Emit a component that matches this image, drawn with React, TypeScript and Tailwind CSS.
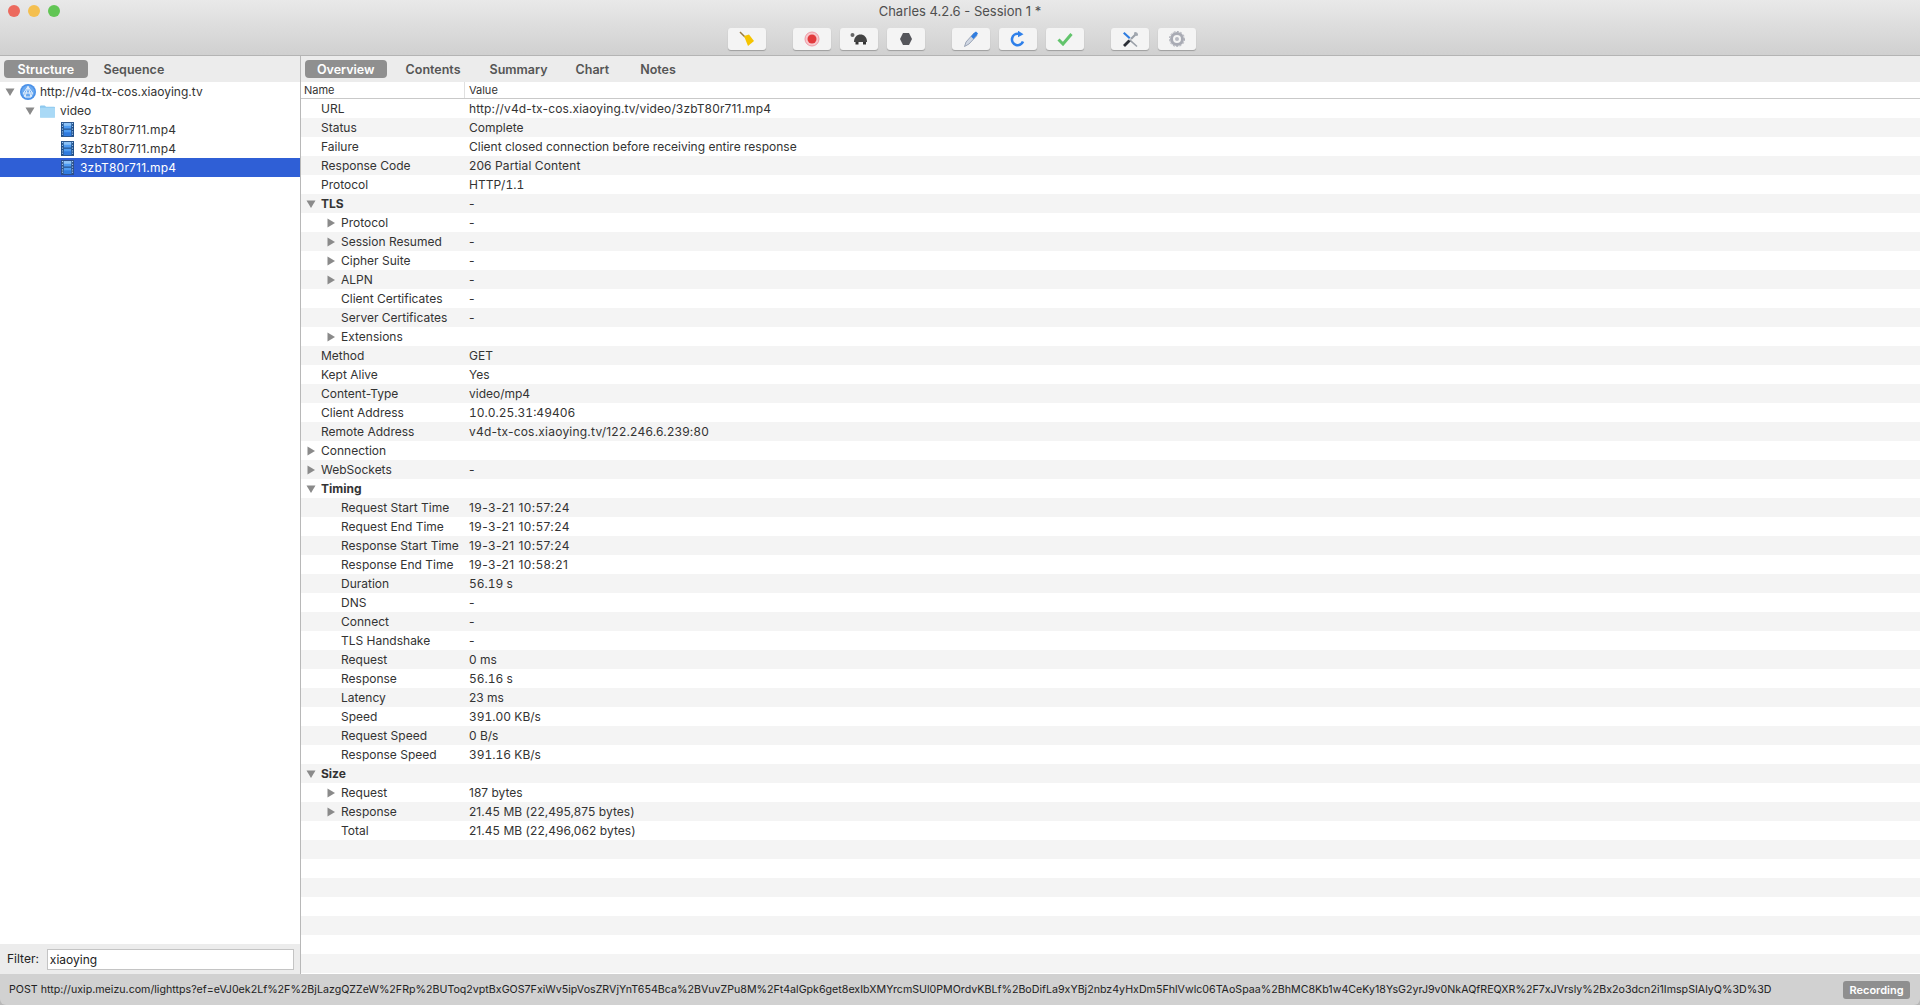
import React from "react";

const F = "font-['Inter','Liberation_Sans',sans-serif]";

type Row = { n: string; v: string; lvl?: number; tri?: "open" | "closed"; bold?: boolean; c?: string };
const DATE = "tracking-[0.45px]";
const NUM = "tabular-nums";
const rows: Row[] = [
  { n: "URL", v: "http://v4d-tx-cos.xiaoying.tv/video/3zbT80r711.mp4", c: "tracking-[0.14px]" },
  { n: "Status", v: "Complete" },
  { n: "Failure", v: "Client closed connection before receiving entire response" },
  { n: "Response Code", v: "206 Partial Content", c: "tracking-[0.1px]" },
  { n: "Protocol", v: "HTTP/1.1", c: NUM },
  { n: "TLS", v: "-", tri: "open", bold: true },
  { n: "Protocol", v: "-", lvl: 1, tri: "closed" },
  { n: "Session Resumed", v: "-", lvl: 1, tri: "closed" },
  { n: "Cipher Suite", v: "-", lvl: 1, tri: "closed" },
  { n: "ALPN", v: "-", lvl: 1, tri: "closed" },
  { n: "Client Certificates", v: "-", lvl: 1 },
  { n: "Server Certificates", v: "-", lvl: 1 },
  { n: "Extensions", v: "", lvl: 1, tri: "closed" },
  { n: "Method", v: "GET" },
  { n: "Kept Alive", v: "Yes" },
  { n: "Content-Type", v: "video/mp4" },
  { n: "Client Address", v: "10.0.25.31:49406", c: NUM },
  { n: "Remote Address", v: "v4d-tx-cos.xiaoying.tv/122.246.6.239:80", c: "tracking-[0.22px]" },
  { n: "Connection", v: "", tri: "closed" },
  { n: "WebSockets", v: "-", tri: "closed" },
  { n: "Timing", v: "", tri: "open", bold: true },
  { n: "Request Start Time", v: "19-3-21 10:57:24", lvl: 1, c: DATE },
  { n: "Request End Time", v: "19-3-21 10:57:24", lvl: 1, c: DATE },
  { n: "Response Start Time", v: "19-3-21 10:57:24", lvl: 1, c: DATE },
  { n: "Response End Time", v: "19-3-21 10:58:21", lvl: 1, c: DATE },
  { n: "Duration", v: "56.19 s", lvl: 1, c: NUM },
  { n: "DNS", v: "-", lvl: 1 },
  { n: "Connect", v: "-", lvl: 1 },
  { n: "TLS Handshake", v: "-", lvl: 1 },
  { n: "Request", v: "0 ms", lvl: 1 },
  { n: "Response", v: "56.16 s", lvl: 1, c: NUM },
  { n: "Latency", v: "23 ms", lvl: 1 },
  { n: "Speed", v: "391.00 KB/s", lvl: 1, c: NUM },
  { n: "Request Speed", v: "0 B/s", lvl: 1 },
  { n: "Response Speed", v: "391.16 KB/s", lvl: 1, c: NUM },
  { n: "Size", v: "", tri: "open", bold: true },
  { n: "Request", v: "187 bytes", lvl: 1, tri: "closed" },
  { n: "Response", v: "21.45 MB (22,495,875 bytes)", lvl: 1, tri: "closed", c: "tracking-[0.05px]" },
  { n: "Total", v: "21.45 MB (22,496,062 bytes)", lvl: 1, tri: undefined, c: "tracking-[0.05px]" },
  ...Array.from({ length: 7 }, () => ({ n: "", v: "" })),
];

function Tri({ open }: { open: boolean }) {
  return (
    <svg width="10" height="10" viewBox="0 0 10 10" className="shrink-0">
      {open ? <path d="M0.5 1.5h9L5 9z" fill="#8a8a8a" /> : <path d="M1.5 0.5v9L9 5z" fill="#8a8a8a" />}
    </svg>
  );
}

function Film({ sel }: { sel?: boolean }) {
  return (
    <svg width="13" height="15" viewBox="0 0 14 16" className="shrink-0">
      <rect width="14" height="16" fill={sel ? "#2d4f86" : "#1f4d86"} />
      <rect x="3" y="1" width="8" height="14" fill="#4f9cf2" />
      <rect x="3" y="1" width="8" height="3" fill="#8cc2f7" />
      <rect x="3" y="7" width="8" height="1.2" fill="#1f4d86" />
      <rect x="3" y="11" width="8" height="4" fill="#2f7ade" />
      {[1.5, 4.5, 7.5, 10.5, 13].map((y) => (
        <g key={y}>
          <rect x="1" y={y - 0.5} width="1.2" height="1.2" fill="#a8cdf5" />
          <rect x="11.8" y={y - 0.5} width="1.2" height="1.2" fill="#a8cdf5" />
        </g>
      ))}
    </svg>
  );
}

function Globe() {
  return (
    <svg width="16" height="16" viewBox="0 0 16 16" className="shrink-0">
      <circle cx="8" cy="8" r="8" fill="#4a90e8" />
      <circle cx="8" cy="8" r="6.5" fill="#6aa9f0" />
      <path d="M8 2.5 12.5 9 11 13H5L3.5 9zM3.5 9h9M8 2.5 5 13M8 2.5 11 13" fill="none" stroke="#e6f0fc" strokeWidth="1" />
    </svg>
  );
}

function Folder() {
  return (
    <svg width="15" height="14" viewBox="0 0 16 14" className="shrink-0">
      <path d="M0 2a1 1 0 0 1 1-1h4l1.5 1.5H15a1 1 0 0 1 1 1V13a1 1 0 0 1-1 1H1a1 1 0 0 1-1-1z" fill="#8ec9ef" />
      <rect y="3.5" width="16" height="10.5" rx="1" fill="#a9d9f6" />
    </svg>
  );
}

function ToolBtn({ children }: { children: React.ReactNode }) {
  return (
    <div className="w-[38px] h-[22px] rounded-[3px] bg-[#f4f4f4] shadow-[0_1px_1px_rgba(0,0,0,0.25)] flex items-center justify-center">
      {children}
    </div>
  );
}

const Tab = ({ label, active, small }: { label: string; active?: boolean; small?: boolean }) => (
  <div
    className={
      active
        ? `h-[18px] ${small ? "px-[12px]" : "px-[13.5px]"} rounded-[4px] bg-[#8f8f8f] text-white font-semibold text-[12.5px] leading-[19px]`
        : "h-[18px] px-[14px] text-[#555] font-semibold text-[12.5px] leading-[19px]"
    }
  >
    {label}
  </div>
);

const TreeRow = ({ indent, children, sel }: { indent: string; children: React.ReactNode; sel?: boolean }) => (
  <div className={`h-[19px] flex items-center ${indent} ${sel ? "bg-[#2f5fd6] text-white" : "text-[#333]"}`}>{children}</div>
);

export default function App() {
  return (
    <div className={`w-[1920px] h-[1005px] flex flex-col overflow-hidden bg-[#b8b8b8] text-[12px] ${F}`}>
      {/* title bar */}
      <div className="h-[56px] shrink-0 flex flex-col bg-gradient-to-b from-[#e9e9e9] to-[#d0d0d0] border-b border-[#b4b4b4]">
        <div className="relative h-[22px] shrink-0 flex items-center justify-center pt-[1px] text-[13px] text-[#4f4f4f]">
          <div className="absolute left-[8px] top-[5px] flex gap-[8px]">
            <span className="w-[12px] h-[12px] rounded-full bg-[#ec6a5e]" />
            <span className="w-[12px] h-[12px] rounded-full bg-[#f4bf4f]" />
            <span className="w-[12px] h-[12px] rounded-full bg-[#61c554]" />
          </div>
          Charles 4.2.6 - Session 1 *
        </div>
        <div className="flex justify-center pt-[6px] pl-[4px] gap-[27px]">
          <ToolBtn>
            <svg width="16" height="16" viewBox="0 0 16 16">
              <path d="M1 1 6 6" stroke="#9a7a3a" strokeWidth="1.5" />
              <path d="M5 5 10 3.5 15 10 9 15z" fill="#f5c400" />
            </svg>
          </ToolBtn>
          <div className="flex gap-[9px]">
            <ToolBtn>
              <svg width="16" height="16" viewBox="0 0 16 16">
                <circle cx="8" cy="8" r="7" fill="#f7c8cd" stroke="#ef9aa5" />
                <circle cx="8" cy="8" r="4.5" fill="#e23a3c" />
              </svg>
            </ToolBtn>
            <ToolBtn>
              <svg width="18" height="14" viewBox="0 0 18 14">
                <circle cx="2.5" cy="3" r="2" fill="#666" />
                <path d="M4 10C4 5 7 2.5 10.5 2.5S17 5 17 10z" fill="#444" />
                <path d="M5.5 10h3v2.5h-3zM13 10h3v2.5h-3z" fill="#333" />
              </svg>
            </ToolBtn>
            <ToolBtn>
              <svg width="14" height="14" viewBox="0 0 14 14">
                <path d="M4 1h6l3 6-3 6H4L1 7z" fill="#55565b" />
              </svg>
            </ToolBtn>
          </div>
          <div className="flex gap-[9px]">
            <ToolBtn>
              <svg width="16" height="18" viewBox="0 0 16 18">
                <path d="M1.5 16.5 3 12 11 3l3 2.5L6 14z" fill="#cfd6e2" stroke="#7c8aa0" strokeWidth=".7" />
                <path d="M8 6.5 11.5 2.5 13 1.5 15 3.5 14 5 10.5 9z" fill="#2f7de0" />
              </svg>
            </ToolBtn>
            <ToolBtn>
              <svg width="16" height="16" viewBox="0 0 16 16">
                <path d="M13 10.5A5.7 5.7 0 1 1 8.5 2.8" fill="none" stroke="#2f80ea" strokeWidth="2.6" />
                <path d="M8 0v6.5l5.5-3z" fill="#2f80ea" transform="translate(0 -.3)" />
              </svg>
            </ToolBtn>
            <ToolBtn>
              <svg width="16" height="14" viewBox="0 0 16 14">
                <path d="M1.5 7.5 6 12 14.5 2" fill="none" stroke="#62c46c" strokeWidth="3" />
              </svg>
            </ToolBtn>
          </div>
          <div className="flex gap-[9px]">
            <ToolBtn>
              <svg width="17" height="17" viewBox="0 0 17 17">
                <path d="M8 8 15.5 15 14.5 16 7 9.5z" fill="#9aa0a8" />
                <path d="M9 8 13.5 3.5" stroke="#9aa0a8" strokeWidth="2.2" />
                <path d="M12.5 1a3 3 0 0 1 3.5 3.5l-2 .5-2-2z" fill="#a2a8b0" />
                <path d="M1 2.5 2.5 1 8.5 6.5 7 8z" fill="#2f7de0" />
                <path d="M6.5 8.5 8.5 10.5 3 16 1 14z" fill="#2b2f36" />
              </svg>
            </ToolBtn>
            <ToolBtn>
              <svg width="16" height="16" viewBox="0 0 16 16">
                <circle cx="8" cy="8" r="5.5" fill="none" stroke="#a9abb4" strokeWidth="3" />
                <circle cx="8" cy="8" r="7.5" fill="none" stroke="#a9abb4" strokeWidth="1" strokeDasharray="2 1.5" />
                <circle cx="8" cy="8" r="2" fill="#b8bac2" />
              </svg>
            </ToolBtn>
          </div>
        </div>
      </div>

      {/* main */}
      <div className="flex-1 min-h-0 flex">
        {/* left */}
        <div className="w-[301px] shrink-0 flex flex-col border-r border-[#b8b8b8]">
          <div className="h-[26px] shrink-0 bg-[#ececec] flex items-center pl-[4px] gap-[2px]">
            <Tab label="Structure" active />
            <Tab label="Sequence" />
          </div>
          <div className="flex-1 min-h-0 bg-white">
            <TreeRow indent="pl-[5px] gap-[5px]">
              <Tri open />
              <span className="mr-[-1px]"><Globe /></span>
              <span>http://v4d-tx-cos.xiaoying.tv</span>
            </TreeRow>
            <TreeRow indent="pl-[25px] gap-[5px]">
              <Tri open />
              <Folder />
              <span>video</span>
            </TreeRow>
            <TreeRow indent="pl-[61px] gap-[6px]">
              <Film />
              <span className="tracking-[0.2px]">3zbT80r711.mp4</span>
            </TreeRow>
            <TreeRow indent="pl-[61px] gap-[6px]">
              <Film />
              <span className="tracking-[0.2px]">3zbT80r711.mp4</span>
            </TreeRow>
            <TreeRow indent="pl-[61px] gap-[6px]" sel>
              <Film sel />
              <span className="tracking-[0.2px]">3zbT80r711.mp4</span>
            </TreeRow>
          </div>
          <div className="h-[30px] shrink-0 bg-[#ececec] flex items-center pl-[7px] gap-[8px] text-[#222]">
            <span>Filter:</span>
            <div className="w-[247px] h-[21px] bg-white border border-[#c4c4c4] pl-[2px] leading-[19px]">xiaoying</div>
          </div>
        </div>
        {/* right */}
        <div className="flex-1 min-w-0 flex flex-col">
          <div className="h-[26px] shrink-0 bg-[#ececec] flex items-center pl-[4px]">
            <Tab label="Overview" active small />
            <span className="w-[5px]" />
            <Tab label="Contents" />
            <span className="w-[1px]" />
            <Tab label="Summary" />
            <Tab label="Chart" />
            <span className="w-[3px]" />
            <Tab label="Notes" />
          </div>
          <div className="h-[17px] shrink-0 flex items-center bg-white border-b border-[#c9c9c9] text-[11px] text-[#333]">
            <div className="w-[164px] shrink-0 pl-[3px] border-r border-[#e0e0e0]">Name</div>
            <div className="pl-[4px]">Value</div>
          </div>
          <div className="flex-1 min-h-0 overflow-hidden bg-white">
            {rows.map((r, i) => (
              <div key={i} className={`h-[19px] flex items-center text-[#333] ${i % 2 ? "bg-[#f4f4f4]" : "bg-white"}`}>
                <div className={`w-[168px] shrink-0 flex items-center ${r.lvl ? "pl-[25px]" : "pl-[5px]"} ${r.bold ? "font-bold" : ""}`}>
                  <span className="w-[15px] shrink-0 flex">{r.tri && <Tri open={r.tri === "open"} />}</span>
                  <span>{r.n}</span>
                </div>
                <div className={r.c}>{r.v}</div>
              </div>
            ))}
          </div>
        </div>
      </div>

      {/* status */}
      <div className="h-[31px] shrink-0 bg-[#d1d1d1] rounded-b-[6px] flex items-center pl-[9px] pr-[10px] justify-between text-[10.67px] text-[#222]">
        <span className="whitespace-nowrap">POST http://uxip.meizu.com/lighttps?ef=eVJ0ek2Lf%2F%2BjLazgQZZeW%2FRp%2BUToq2vptBxGOS7FxiWv5ipVosZRVjYnT654Bca%2BVuvZPu8M%2Ft4alGpk6get8exIbXMYrcmSUl0PMOrdvKBLf%2BoDifLa9xYBj2nbz4yHxDm5FhlVwlc06TAoSpaa%2BhMC8Kb1w4CeKy18YsG2yrJ9v0NkAQfREQXR%2F7xJVrsly%2Bx2o3dcn2i1ImspSIAlyQ%3D%3D</span>
        <span className="w-[67px] h-[18px] rounded-[3px] bg-[#8f8f8f] text-white font-semibold text-[11px] leading-[18px] text-center">Recording</span>
      </div>
    </div>
  );
}
